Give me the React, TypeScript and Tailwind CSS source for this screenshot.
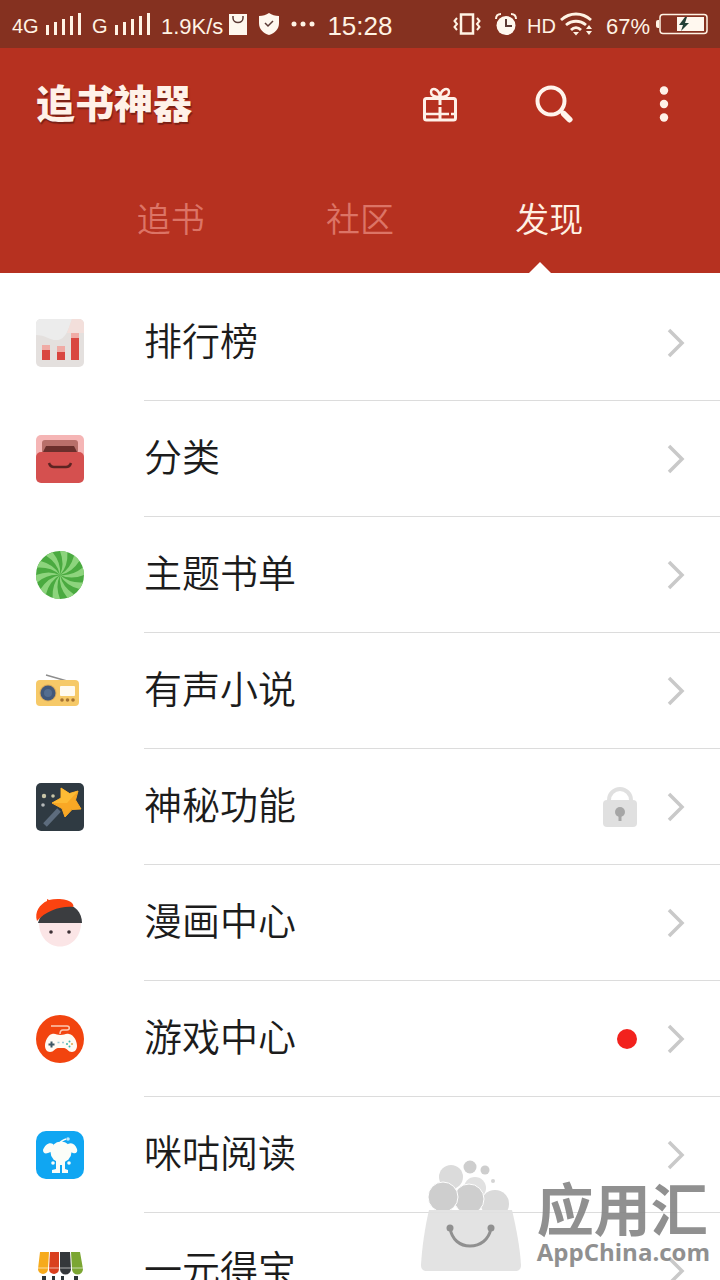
import React from 'react';

const RankIcon: React.FC = () => (
  <svg viewBox="0 0 48 48" className="size-12">
    <rect width="48" height="48" rx="5" fill="#e4e0de" />
    <path d="M5 0h31C32 12 29 20 22 21C14 22 10 16 0 16V5a5 5 0 0 1 5-5z" fill="#ececec" />
    <path d="M36 0h7a5 5 0 0 1 5 5v9H31z" fill="#f3dfdb" />
    <path d="M6 26h8v6H6zM21 27h8v6h-8zM35 14h8v6h-8z" fill="#f0aba5" />
    <path d="M6 31h8v10H6zM21 33h8v8h-8zM35 19h8v22h-8z" fill="#d94640" />
  </svg>
);

const CategoryIcon: React.FC = () => (
  <svg viewBox="0 0 48 48" className="size-12">
    <rect width="48" height="40" rx="5" fill="#f5b5b5" />
    <path d="M9 5h30a3 3 0 0 1 3 3v10H6V8a3 3 0 0 1 3-3z" fill="#b96f6a" />
    <path d="M10 11h28l3 6H7z" fill="#6b2f2c" />
    <rect y="17" width="48" height="31" rx="5" fill="#d5504f" />
    <path d="M13 28c1 3 3 4 5 4h12c2 0 4-1 5-4" fill="none" stroke="#5c2422" strokeWidth="2.5" />
  </svg>
);

const blades = [0, 36, 72, 108, 144, 180, 216, 252, 288, 324];

const ThemeIcon: React.FC = () => (
  <svg viewBox="0 0 48 48" className="size-12">
    <circle cx="24" cy="24" r="24" fill="#4aaa40" />
    {blades.map((angle) => (
      <path
        key={angle}
        d="M24 24Q29 13 24 0A24 24 0 0 1 31.4 1.2Q32.2 15.1 24 24Z"
        fill="#8dd47d"
        transform={`rotate(${angle} 24 24)`}
      />
    ))}
  </svg>
);

const RadioIcon: React.FC = () => (
  <svg viewBox="0 0 48 48" className="size-12">
    <path d="M10 8l21 6" stroke="#8d8d8d" strokeWidth="1.5" />
    <rect y="13" width="43" height="26" rx="4" fill="#f6c968" />
    <circle cx="12" cy="26" r="8.5" fill="#d9a95a" />
    <circle cx="12" cy="26" r="7.5" fill="#41587a" />
    <circle cx="12" cy="26" r="4" fill="#536d90" />
    <rect x="24" y="19" width="15" height="10" rx="1" fill="#fffaf0" />
    <circle cx="26" cy="33" r="1.8" fill="#a67433" />
    <circle cx="31.5" cy="33" r="1.8" fill="#a67433" />
    <circle cx="37" cy="33" r="1.8" fill="#a67433" />
  </svg>
);

const MagicIcon: React.FC = () => (
  <svg viewBox="0 0 48 48" className="size-12">
    <rect width="48" height="48" rx="5" fill="#2f3a42" />
    <path d="M9 42L23 27" stroke="#5d6c7d" strokeWidth="5" />
    <path
      d="M25 5l8.5 5.5L42 8l-2.500 9L45 26l-9 .5L29 34l-3-8.500L16 20l9-5z"
      fill="#f9a825"
      stroke="#f9a825"
      strokeWidth="1"
      strokeLinejoin="round"
    />
    <path d="M25 5l8.5 5.5L42 8l-11 12L16 20l9-5z" fill="#fdbb35" />
    <circle cx="8" cy="13" r="2.2" fill="#c8c5a8" />
    <circle cx="17" cy="13" r="1.8" fill="#c8c5a8" />
    <circle cx="7" cy="22" r="1.8" fill="#b5b9ba" />
  </svg>
);

const ComicIcon: React.FC = () => (
  <svg viewBox="0 0 48 48" className="size-12 overflow-visible">
    <path d="M3 24h42c0 13-9 23.5-21 23.5S3 37 3 24z" fill="#fbe5e6" />
    <path d="M2 24C5 12 16 5 28 5c11 0 18 9 18 19z" fill="#3b3d40" />
    <path d="M1 22C-2 13 4 5 11 2l0-2 2 1C21-1 32 0 36 4c1 1 2 3 1 4C24 7 10 12 1 22z" fill="#fb4310" />
    <circle cx="15" cy="33" r="1.8" fill="#3c3034" />
    <circle cx="33" cy="33" r="1.8" fill="#3c3034" />
  </svg>
);

const GameIcon: React.FC = () => (
  <svg viewBox="0 0 48 48" className="size-12">
    <circle cx="24" cy="24" r="24" fill="#f2440f" />
    <path d="M15 11h16c3 0 3 4 0 4h-4c-2 0-3 1-3 4" fill="none" stroke="#fbc9b4" strokeWidth="1.5" />
    <path
      d="M16 19c3-1 5 1 8.500 1S30 18 33 19c5 1 8 7 8 12 0 3-2 6-5 6-4 0-5-4-8-4h-6c-3 0-4 4-8 4-3 0-5-3-5-6 0-5 3-11 7-12z"
      fill="#fffaf3"
    />
    <path d="M15.500 26.500v6M12.500 29.500h6" stroke="#3f5663" strokeWidth="2" />
    <path d="M21.500 27.500h2M26 27.500h2" stroke="#9fc9d6" strokeWidth="1.5" />
    <circle cx="33.5" cy="26.5" r="1" fill="#3fb7ab" />
    <circle cx="33.5" cy="31.5" r="1" fill="#3fb7ab" />
    <circle cx="31" cy="29" r="1" fill="#3fb7ab" />
    <circle cx="36" cy="29" r="1" fill="#e0aa50" />
  </svg>
);

const MiguIcon: React.FC = () => (
  <svg viewBox="0 0 48 48" className="size-12">
    <rect width="48" height="48" rx="10" fill="#10a6f2" />
    <g fill="#fbfdf8">
      <circle cx="25" cy="21" r="10.5" />
      <path d="M17 13c-4-2-8 1-10 6 0 3 2 4 5 3l5-2zM32 13c4-2 7 0 9 5 1 3-1 5-4 4l-5-2z" />
      <path d="M20 29h9v9l3 1v3h-6v-8h-2v8h-8v-3l4-1z" />
      <circle cx="17" cy="32" r="1.8" />
      <circle cx="33" cy="32" r="1.8" />
    </g>
    <path d="M24 12c1-2 3-3 6-4" fill="none" stroke="#fbfdf8" strokeWidth="1.5" />
    <circle cx="32" cy="8" r="1.8" fill="#bde6fa" />
  </svg>
);

const ShopIcon: React.FC = () => (
  <svg viewBox="0 0 48 48" className="size-12">
    <path d="M4 5h9l-1 17a5 5 0 0 1-10 0z" fill="#f6aa1c" />
    <path d="M14 5h9v17a5 5 0 0 1-10 0z" fill="#d9401f" />
    <path d="M24 5h10l1 17a5 5 0 0 1-11 0z" fill="#34383b" />
    <path d="M35 5h9l3 17a5 5 0 0 1-11 0z" fill="#7ba632" />
    <path d="M1 21h46" stroke="#fff" strokeOpacity="0.6" />
    <path d="M6 29h4v19H6zM16 29h3v5h-3zM25 29h3v5h-3zM38 29h4v19h-4z" fill="#2d3538" />
    <path d="M6 44h36v4H6z" fill="#2d3538" />
  </svg>
);

const ChevronIcon: React.FC = () => (
  <svg viewBox="0 0 18 30" className="h-[30px] w-[18px]">
    <path d="M2 2l13 13L2 28" fill="none" stroke="#c9c9c9" strokeWidth="3.5" />
  </svg>
);

const LockIcon: React.FC = () => (
  <svg viewBox="0 0 34 40" className="h-10 w-[34px]">
    <path d="M6 16v-3a11 11 0 0 1 22 0v3" fill="none" stroke="#e0e0e0" strokeWidth="4" />
    <rect y="13" width="34" height="27" rx="4" fill="#e0e0e0" />
    <circle cx="17" cy="25" r="5" fill="#a6a6a6" />
    <path d="M17 26v8" stroke="#a6a6a6" strokeWidth="3" />
  </svg>
);

const SignalIcon: React.FC = () => (
  <svg viewBox="0 0 36 22" className="mb-1 h-[22px] w-9" fill="#fff3e4">
    <path d="M0 12h3v10H0zM8 9h3v13H8zM16 6h3v16h-3zM24 3h3v19h-3zM32 0h3v22h-3z" />
  </svg>
);

const StatusBar: React.FC = () => (
  <div className="flex h-12 shrink-0 items-center justify-between bg-[#853120] px-3 pt-1 text-[#fff3e4]">
    <div className="flex items-center">
      <span className="w-[34px] text-xl">4G</span>
      <SignalIcon />
      <span className="ml-2.5 w-[23px] text-xl">G</span>
      <SignalIcon />
      <span className="ml-2.5 text-[22px]">1.9K/s</span>
      <svg viewBox="0 0 18 21" className="mb-1 ml-1.5 h-[21px] w-[18px]">
        <path d="M0 0h18v21H0z" fill="#fff8ef" />
        <path d="M4 2v2c0 6 10 6 10 0V2" fill="none" stroke="#5b3a35" strokeWidth="1.5" />
      </svg>
      <svg viewBox="0 0 20 22" className="mb-1 ml-3 h-[22px] w-5">
        <path d="M10 0c3 2 6 3 10 3v7c0 6-4 10-10 12C4 20 0 16 0 10V3c4 0 7-1 10-3z" fill="#fff8ef" />
        <path d="M6 10l3 3 5-5" fill="none" stroke="#5b3a35" strokeWidth="1.5" />
      </svg>
      <svg viewBox="0 0 24 6" className="mb-1 ml-3 h-1.5 w-6" fill="#fff3e4">
        <circle cx="3" cy="3" r="2.5" />
        <circle cx="12" cy="3" r="2.5" />
        <circle cx="21" cy="3" r="2.5" />
      </svg>
      <span className="ml-3 text-[26px]">15:28</span>
    </div>
    <div className="flex items-center">
      <svg viewBox="0 0 28 22" className="mb-1 h-[22px] w-7" fill="none" stroke="#fff3e4" strokeWidth="2">
        <path d="M8 1.500h12v19H8z" strokeWidth="2.5" />
        <path d="M4 5L1.500 8 4 11l-2.500 3L4 17M24 5l2.500 3-2.500 3 2.500 3-2.500 3" />
      </svg>
      <svg viewBox="0 0 22 22" className="mb-1 ml-3.5 h-[22px] w-[22px]">
        <circle cx="11" cy="12.5" r="9.5" fill="#fff8ef" />
        <path d="M1 6c0-3 2-5 5-5M21 6c0-3-2-5-5-5" fill="none" stroke="#fff3e4" strokeWidth="2" />
        <path d="M11 6v7h6" fill="none" stroke="#5b3a35" strokeWidth="2" />
      </svg>
      <span className="ml-2.5 text-xl">HD</span>
      <svg viewBox="0 0 34 24" className="mb-1 ml-1 h-6 w-[34px]" fill="none" stroke="#fff3e4" strokeWidth="2.8">
        <path d="M1 8c9-8 21-8 30 0M6 13c6-5 14-5 20 0M11 18c3-3 7-3 10 0" />
        <path d="M13 20h6l-3 3.500zM26 17h6l-3-4zM26 19h6l-3 4z" fill="#fff3e4" stroke="none" />
      </svg>
      <span className="ml-3 text-[22px]">67%</span>
      <svg viewBox="0 0 52 22" className="mb-1 ml-1.5 h-[22px] w-[52px]">
        <path d="M3 7H2a2 2 0 0 0-2 2v4a2 2 0 0 0 2 2h1z" fill="#fff3e4" />
        <rect x="4" y="1.5" width="47" height="19" rx="3" fill="none" stroke="#fff3e4" strokeWidth="1.5" />
        <path d="M21 4h27v14H21z" fill="#fff8ef" />
        <path d="M29 4l-6 8h4l-2 6 8-8h-4l2-6z" fill="#244036" />
      </svg>
    </div>
  </div>
);

const tabs = ['追书', '社区', '发现'];

const Header: React.FC = () => (
  <header className="relative shrink-0 bg-[#b63120]">
    <div className="flex h-28 items-center justify-between pr-[49px] pl-9">
      <h1 className="text-[39px] leading-none font-black text-[#fff1e8] [text-shadow:1px_2px_1px_#7a2015]">
        追书神器
      </h1>
      <div className="flex items-center">
        <button aria-label="礼物" className="mr-[78px]">
          <svg viewBox="0 0 34 36" className="h-9 w-[34px]" fill="none" stroke="#fff1e8">
            <rect x="1.5" y="12.5" width="31" height="21.5" rx="2" strokeWidth="3" />
            <path d="M17 13v6M17 21v12" strokeWidth="3" />
            <path d="M2 28h24M28 28h3" strokeWidth="2.5" />
            <path d="M17 11C13 11 8 10 8 6c0-5 8-4 9 5M17 11c4 0 9-1 9-5 0-5-8-4-9 5" strokeWidth="2.5" />
          </svg>
        </button>
        <button aria-label="搜索" className="mr-[84px]">
          <svg viewBox="0 0 38 38" className="h-[38px] w-[38px]" fill="none" stroke="#fff4ec">
            <circle cx="16" cy="16" r="13.5" strokeWidth="4" />
            <path d="M26 26l3 3" strokeWidth="4" />
            <path d="M29 29l5.500 5.500" strokeWidth="6" strokeLinecap="round" />
          </svg>
        </button>
        <button aria-label="更多">
          <svg viewBox="0 0 14 36" className="h-9 w-3.5" fill="#fff1e8">
            <circle cx="7" cy="4.5" r="4.2" />
            <circle cx="7" cy="18" r="4.2" />
            <circle cx="7" cy="31.5" r="4.2" />
          </svg>
        </button>
      </div>
    </div>
    <nav className="flex h-[113px] items-center px-[76px] pt-2">
      {tabs.map((tab) => (
        <button
          key={tab}
          className={`flex-1 text-[34px] font-[350] ${tab === '发现' ? 'text-[#fff1e4]' : 'text-[#dc7466]'}`}
        >
          {tab}
        </button>
      ))}
    </nav>
    <svg viewBox="0 0 22 11" className="absolute bottom-0 left-3/4 h-[11px] w-[22px] -translate-x-1/2">
      <path d="M0 11L11 0l11 11z" fill="#fff" />
    </svg>
  </header>
);

const items = [
  { title: '排行榜', icon: <RankIcon /> },
  { title: '分类', icon: <CategoryIcon /> },
  { title: '主题书单', icon: <ThemeIcon /> },
  { title: '有声小说', icon: <RadioIcon /> },
  { title: '神秘功能', icon: <MagicIcon />, extra: <LockIcon /> },
  { title: '漫画中心', icon: <ComicIcon /> },
  { title: '游戏中心', icon: <GameIcon />, extra: <span className="size-5 rounded-full bg-[#f2221d]" /> },
  { title: '咪咕阅读', icon: <MiguIcon /> },
  { title: '一元得宝', icon: <ShopIcon /> },
];

const Watermark: React.FC = () => (
  <div className="pointer-events-none absolute right-2.5 bottom-2 flex items-end gap-4 opacity-90">
    <svg viewBox="0 0 100 112" className="h-28 w-[100px]">
      <circle cx="30" cy="17" r="12" fill="#d8d8d8" />
      <circle cx="49" cy="7" r="6.5" fill="#c9c9c9" />
      <circle cx="64" cy="10" r="4.5" fill="#c9c9c9" />
      <circle cx="72" cy="21" r="2" fill="#d0d0d0" />
      <circle cx="54" cy="28" r="11" fill="#dedede" />
      <circle cx="74" cy="44" r="14" fill="#d6d6d6" />
      <circle cx="48" cy="39" r="15" fill="#c9c9c9" stroke="#fff" />
      <circle cx="22" cy="37" r="15" fill="#c9c9c9" stroke="#fff" />
      <path d="M8 50h83c4 17 8 37 9 55 0 4-2 6-6 6H6c-4 0-6-2-6-6 1-18 4-38 8-55z" fill="#e1e1e1" />
      <path d="M29 68c2 12 10 18 20 18s19-6 21-18" fill="none" stroke="#858585" strokeWidth="3" />
      <circle cx="29" cy="68" r="3.5" fill="#858585" />
      <circle cx="70" cy="68" r="3.5" fill="#858585" />
    </svg>
    <div className="flex flex-col pb-2 text-[#858585]">
      <span className="text-[57px] leading-[58px] font-bold">应用汇</span>
      <span className="font-['Open_Sans',sans-serif] text-2xl leading-6 font-bold">AppChina.com</span>
    </div>
  </div>
);

const App: React.FC = () => {
  return (
    <div className="relative flex h-screen flex-col overflow-hidden bg-white font-['Liberation_Sans','Noto_Sans_CJK_SC',sans-serif]">
      <StatusBar />
      <Header />
      <ul className="min-h-0 flex-1 overflow-hidden pt-3">
        {items.map((item) => (
          <li key={item.title}>
            <a href="#" className="flex h-[116px] items-center gap-[60px] pl-9">
              {item.icon}
              <span className="flex h-full flex-1 items-center border-b border-[#dcdcdc] pr-[35px]">
                <span className="flex-1 text-[38px] font-[350] text-[#1c1c1c]">{item.title}</span>
                {item.extra}
                <span className="ml-[30px]">
                  <ChevronIcon />
                </span>
              </span>
            </a>
          </li>
        ))}
      </ul>
      <Watermark />
    </div>
  );
};

export default App;
